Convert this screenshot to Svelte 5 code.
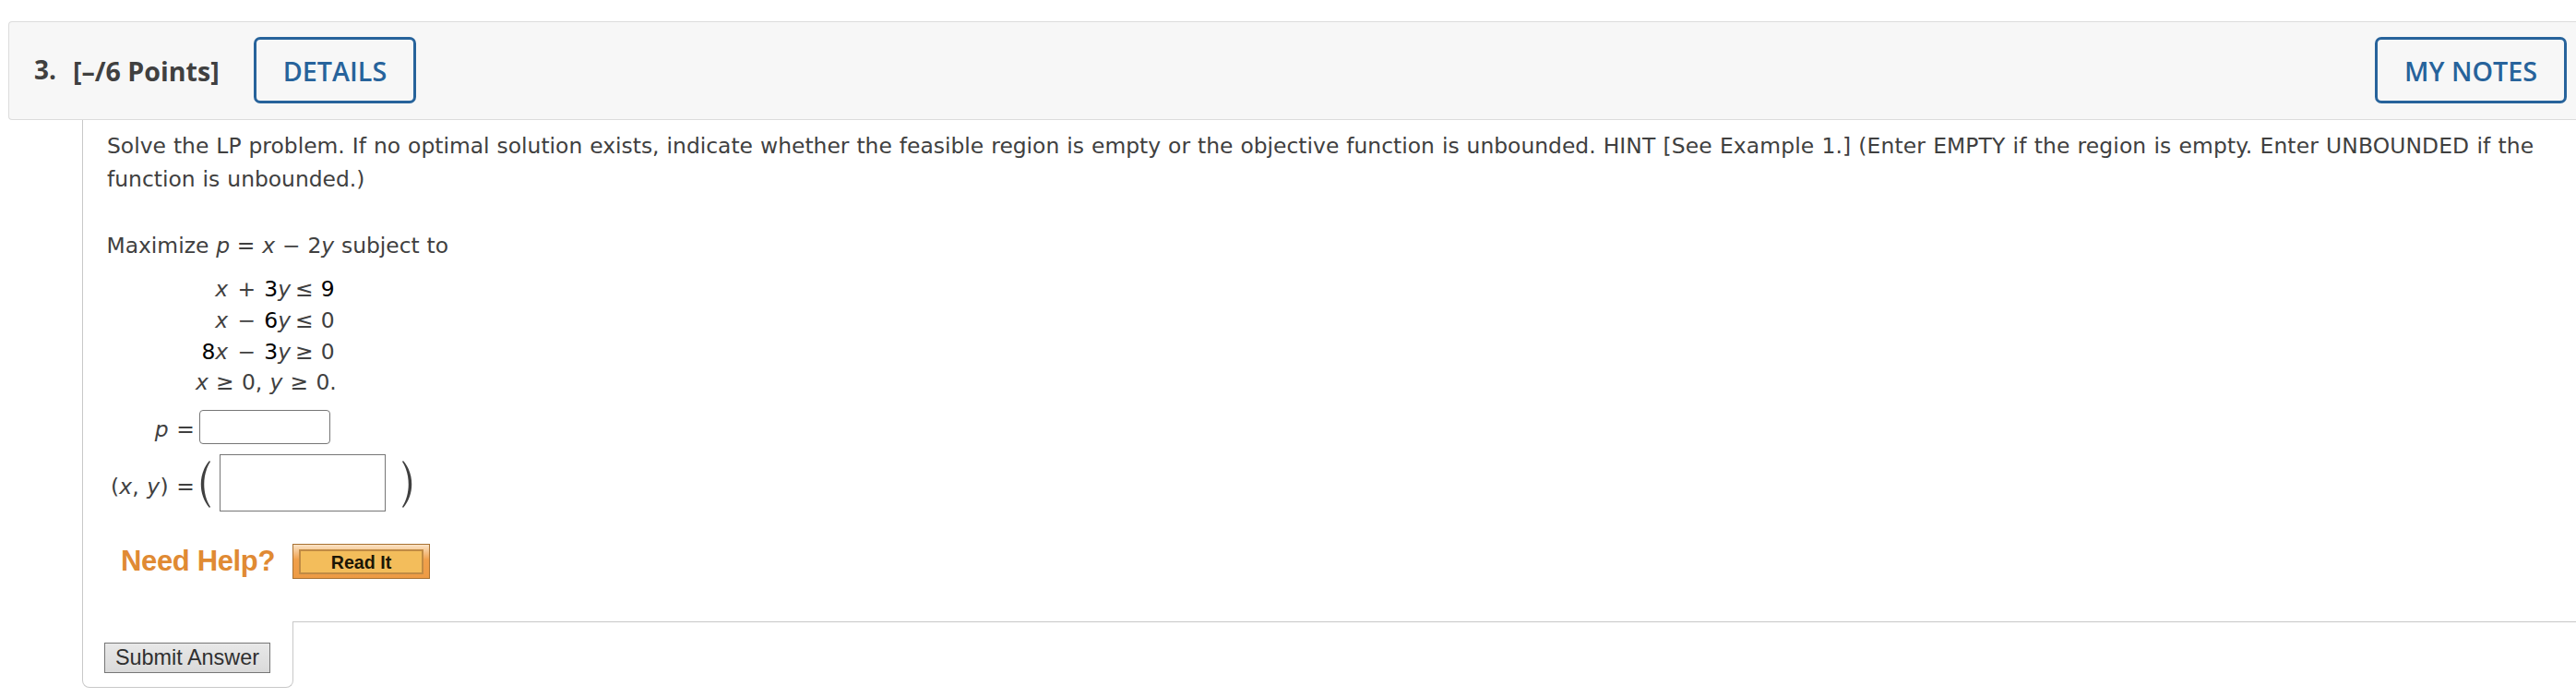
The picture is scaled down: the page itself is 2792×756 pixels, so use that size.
<script>
	// Constraint rows: coefficient, operator and right-hand side
	const constraints = [
		{ a: '', op: '+', b: '3', rel: '≤', rhs: '9', random: true },
		{ a: '', op: '−', b: '6', rel: '≤', rhs: '0', random: false },
		{ a: '8', op: '−', b: '3', rel: '≥', rhs: '0', random: false }
	];

	let p = '';
	let point = '';
</script>

<div class="question">
	<div class="header">
		<span class="number">3.</span>
		<span class="points">[–/6 Points]</span>
		<button class="outline-button details">DETAILS</button>
		<button class="outline-button notes">MY NOTES</button>
	</div>

	<div class="body">
		<p class="prompt">
			Solve the LP problem. If no optimal solution exists, indicate whether the feasible region is empty or the objective function is unbounded. <span class="hint">HINT [See Example 1.] (Enter EMPTY if the region is empty. Enter UNBOUNDED if the</span><br />
			function is unbounded.)
		</p>
		<p class="objective">Maximize <i>p</i> = <i>x</i> − 2<i>y</i> subject to</p>

		<div class="system">
			{#each constraints as row}
				<div class="lhs"><b>{row.a}</b><i>x</i> <span class="op">{row.op}</span> <b>{row.b}</b><i>y</i></div>
				<div class="rhs">{row.rel} <span class:random={row.random}>{row.rhs}</span></div>
			{/each}
			<div class="bounds"><i>x</i> ≥ 0, <i>y</i> ≥ 0.</div>
		</div>

		<div class="answer">
			<span class="label"><i>p</i> =</span>
			<input class="value" bind:value={p} aria-label="p" />
		</div>
		<div class="answer pair">
			<span class="label">(<i>x</i>, <i>y</i>) =</span>
			<svg class="paren" width="13" height="54" viewBox="0 0 13 54">
				<path d="M11 1C-1.300 15-1.300 38 11 52L12 51C3 37 3 16 12 2Z" />
			</svg>
			<input class="point" bind:value={point} aria-label="x, y" />
			<svg class="paren close" width="13" height="54" viewBox="0 0 13 54">
				<path d="M2 1C14.300 15 14.300 38 2 52L1 51C10 37 10 16 1 2Z" />
			</svg>
		</div>

		<div class="help">
			<span class="help-title">Need Help?</span>
			<button class="read"><span>Read It</span></button>
		</div>
	</div>

	<div class="footer">
		<div class="tab"><button class="submit">Submit Answer</button></div>
		<div class="rule"></div>
	</div>
</div>

<style>
	:global(body) {
		background: #fff;
		overflow: hidden;
	}

	.question {
		box-sizing: border-box;
		width: 2792px;
		height: 756px;
		padding: 23px 0 0 9px;
		overflow: hidden;
		color: #404040;
		font-family: Verdana, 'DejaVu Sans', sans-serif;
		font-size: 23.4px;
	}

	.question * {
		box-sizing: border-box;
	}

	.header {
		display: flex;
		align-items: center;
		height: 107px;
		padding: 0 10px 1px 27px;
		border: 1px solid #dcdcdc;
		border-right: none;
		border-radius: 4px 0 0 4px;
		background: #f7f7f7;
		font-family: 'Open Sans', sans-serif;
		font-size: 28.6px;
		font-weight: 700;
		white-space: nowrap;
	}

	.number {
		width: 42px;
		padding-bottom: 3px;
		font-size: 28px;
	}

	.points {
		width: 196px;
	}

	.outline-button {
		height: 72px;
		padding: 0;
		border: 3px solid #27639b;
		border-radius: 7px;
		background: transparent;
		color: #27639b;
		font: 600 28.7px 'Open Sans', sans-serif;
	}

	.details {
		width: 176px;
	}

	.notes {
		width: 208px;
		margin-left: auto;
	}

	.body {
		height: 543px;
		margin-left: 80px;
		padding: 10px 0 0 26px;
		border-left: 1px solid #c8c8c8;
		white-space: nowrap;
		word-spacing: 0.82px;
	}

	p {
		margin: 0;
		line-height: 36px;
	}

	.prompt {
		word-spacing: 0.6px;
	}

	.hint {
		letter-spacing: 0.12px;
	}

	.objective {
		margin-top: 36px;
		margin-left: -0.5px;
		word-spacing: 0.4px;
	}

	.system {
		display: grid;
		grid-template-columns: 199px 50px;
		grid-auto-rows: 34px;
		column-gap: 5px;
		margin-top: 12px;
		line-height: 34px;
	}

	.system b {
		color: #000;
		font-weight: 400;
	}

	.system .random {
		color: #000;
	}

	.lhs {
		text-align: right;
	}

	.op {
		margin: 0 1px 0 2px;
	}

	.bounds {
		grid-column: 1 / 3;
		padding-left: 96px;
		line-height: 32px;
		word-spacing: 0.8px;
	}

	.answer {
		display: flex;
		align-items: center;
		height: 37px;
		margin-top: 12px;
	}

	.label {
		display: flex;
		justify-content: flex-end;
		width: 95px;
		padding-top: 4px;
		white-space: pre;
		letter-spacing: 0.2px;
	}

	input {
		padding: 0 6px;
		border: 1px solid #767676;
		background: #fff;
		font: inherit;
	}

	.value {
		width: 142px;
		height: 37px;
		margin-left: 5px;
		border-radius: 4px;
	}

	.pair {
		height: 62px;
		margin-top: 11px;
	}

	.pair .label {
		padding-top: 8px;
	}

	.paren {
		margin-top: 4px;
		margin-left: 5px;
		fill: #404040;
	}

	.point {
		width: 180px;
		height: 62px;
		margin-left: 9px;
	}

	.close {
		margin-left: 17px;
	}

	.help {
		display: flex;
		align-items: center;
		height: 38px;
		margin-top: 35px;
		padding-left: 15px;
		font-family: 'Liberation Sans', Arial, sans-serif;
		font-weight: 700;
		word-spacing: 0;
	}

	.help-title {
		width: 186px;
		color: #e08a33;
		font-size: 31px;
		letter-spacing: -0.35px;
	}

	.read {
		width: 149px;
		height: 38px;
		padding: 5px 6px;
		border: 1px solid #a87132;
		background: linear-gradient(#fae3c6, #f0a04b 45%, #ed9b45);
		color: #1c1606;
		font: 700 19.7px 'Liberation Sans', Arial, sans-serif;
	}

	.read span {
		display: block;
		height: 27px;
		border: 2px solid #c08b44;
		background: #f3bd5b;
		line-height: 25px;
	}

	.footer {
		display: flex;
		margin-left: 80px;
	}

	.tab {
		width: 229px;
		height: 72px;
		padding: 23px 0 0 23px;
		border: 1px solid #c8c8c8;
		border-top: none;
		border-radius: 0 0 8px 8px;
	}

	.rule {
		flex: 1;
		border-top: 1px solid #c8c8c8;
	}

	.submit {
		display: block;
		width: 180px;
		height: 33px;
		padding: 0;
		border: 1px solid #767676;
		background: linear-gradient(#e8e8e8, #dadada);
		color: #303030;
		font: 23.4px 'Liberation Sans', Arial, sans-serif;
	}
</style>
